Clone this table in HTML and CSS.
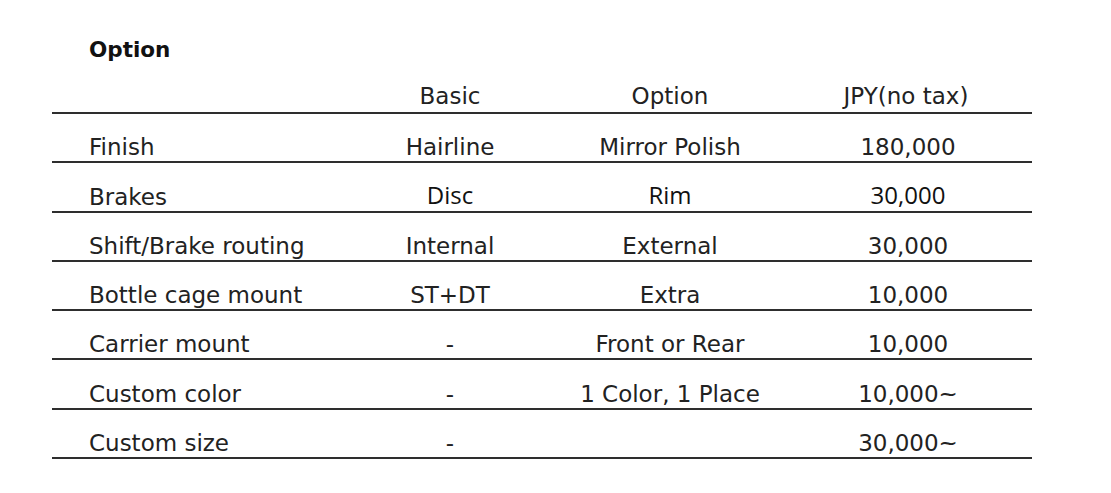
FILE: index.html
```html
<!DOCTYPE html>
<html lang="en">
<head>
<meta charset="utf-8">
<title>Option</title>
<link rel="stylesheet" href="styles.css">
</head>
<body>
<div class="page">
  <h2 class="title">Option</h2>
  <div class="table">
    <div class="row head">
      <div class="c label"></div>
      <div class="c">Basic</div>
      <div class="c">Option</div>
      <div class="c">JPY(no tax)</div>
    </div>
    <div class="row">
      <div class="c label">Finish</div>
      <div class="c">Hairline</div>
      <div class="c">Mirror Polish</div>
      <div class="c price">180,000</div>
    </div>
    <div class="row">
      <div class="c label">Brakes</div>
      <div class="c alt">Disc</div>
      <div class="c alt">Rim</div>
      <div class="c price alt">30,000</div>
    </div>
    <div class="row">
      <div class="c label">Shift/Brake routing</div>
      <div class="c">Internal</div>
      <div class="c">External</div>
      <div class="c price">30,000</div>
    </div>
    <div class="row">
      <div class="c label">Bottle cage mount</div>
      <div class="c">ST+DT</div>
      <div class="c">Extra</div>
      <div class="c price">10,000</div>
    </div>
    <div class="row">
      <div class="c label">Carrier mount</div>
      <div class="c">-</div>
      <div class="c">Front or Rear</div>
      <div class="c price">10,000</div>
    </div>
    <div class="row">
      <div class="c label">Custom color</div>
      <div class="c">-</div>
      <div class="c">1 Color, 1 Place</div>
      <div class="c price">10,000~</div>
    </div>
    <div class="row">
      <div class="c label">Custom size</div>
      <div class="c">-</div>
      <div class="c"></div>
      <div class="c price">30,000~</div>
    </div>
  </div>
</div>
</body>
</html>
```

FILE: styles.css
```css
html, body {
  margin: 0;
  padding: 0;
  background: #ffffff;
}

.page {
  padding: 38px 0 0 52px;
  font-family: "DejaVu Sans", "Liberation Sans", sans-serif;
  color: #222;
}

.title {
  margin: 0 0 0 37px;
  height: 24px;
  font-size: 21.5px;
  line-height: 24px;
  font-weight: bold;
  color: #111;
}

.table {
  width: 980px;
}

.row {
  display: grid;
  grid-template-columns: 288px 220px 220px 1fr;
  align-items: end;
  box-sizing: border-box;
  height: 49.3px;
  border-bottom: 2px solid #2e2e2e;
  font-size: 23px;
  line-height: 28px;
}

.row.head {
  height: 52px;
  padding-bottom: 2px;
}

.c {
  text-align: center;
  white-space: nowrap;
}

.c.label {
  text-align: left;
  padding-left: 37px;
}

.c.price {
  padding-left: 4px;
}

.c.alt {
  font-family: "Open Sans", "Noto Sans", sans-serif;
  font-size: 24px;
  color: #111;
  padding-bottom: 2px;
}
```
